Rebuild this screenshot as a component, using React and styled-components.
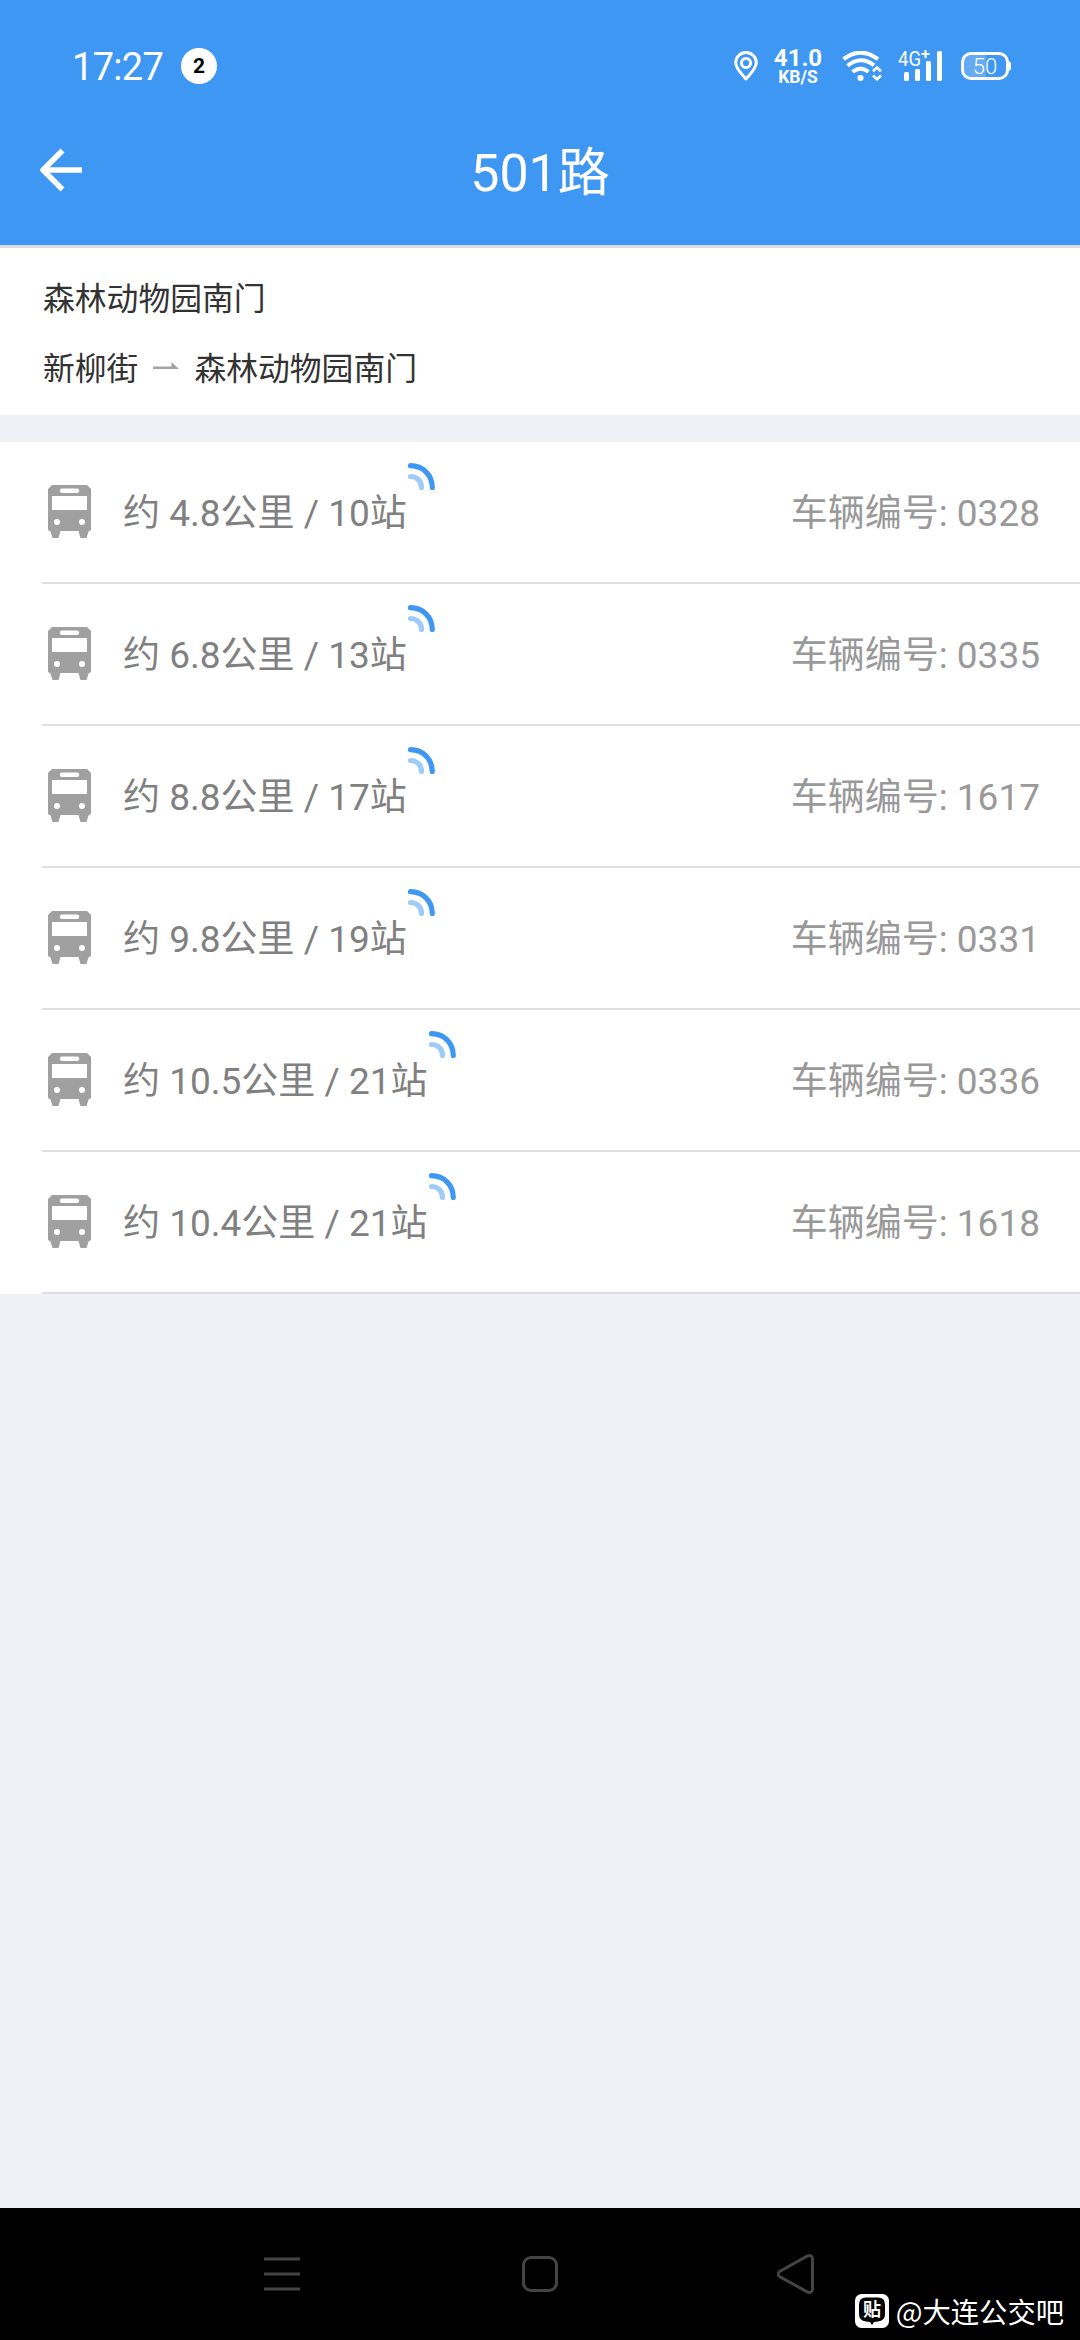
import React from "react";
import styled, { createGlobalStyle } from "styled-components";

const GlobalStyle = createGlobalStyle`
  * {
    box-sizing: border-box;
  }

  body {
    margin: 0;
    background: #f0f1f6;
    font-family: Roboto, "Noto Sans CJK SC", sans-serif;
  }

  svg {
    display: block;
    flex-shrink: 0;
  }
`;

const Screen = styled.div`
  position: relative;
  width: 1080px;
  height: 2340px;
  display: flex;
  flex-direction: column;
  background: #f0f1f6;
  overflow: hidden;
`;

const Header = styled.header`
  height: 248px;
  background: #3e97f2;
  border-bottom: 3px solid #d9dde6;
  color: #fff;
`;

const StatusBar = styled.div`
  height: 132px;
  padding: 0 69px 0 72px;
  display: flex;
  align-items: center;
  justify-content: space-between;
`;

const StatusGroup = styled.div`
  display: flex;
  align-items: center;
`;

const Clock = styled.span`
  width: 109px;
  padding-top: 1px;
  font-size: 38px;
  line-height: 44px;
  letter-spacing: -0.7px;
`;

const CountBadge = styled.span`
  width: 36px;
  height: 36px;
  border-radius: 50%;
  background: #fff;
  color: #000;
  font-size: 21px;
  font-weight: 700;
  line-height: 37px;
  text-align: center;
`;

const NetSpeed = styled.div`
  width: 50px;
  margin: 0 19px 0 15px;
  padding-top: 2px;
  font-weight: 700;
  text-align: center;
`;

const SpeedValue = styled.div`
  font-size: 24px;
  line-height: 19px;
`;

const SpeedUnit = styled.div`
  font-size: 17.5px;
  line-height: 18px;
`;

const SignalBox = styled.div`
  margin: -8px 19px 0 16px;
`;

const TitleBar = styled.div`
  height: 76px;
  padding: 0 40px;
  display: grid;
  grid-template-columns: 42px 1fr 42px;
  align-items: center;
`;

const Title = styled.h1`
  margin: 0;
  padding-top: 7px;
  font-size: 52px;
  font-weight: 400;
  line-height: 60px;
  text-align: center;
`;

const RouteInfo = styled.section`
  height: 167px;
  padding: 13px 43px 0;
  background: #fff;
  color: #333;
  font-size: 31.8px;
`;

const RouteLine = styled.div`
  height: 70px;
  display: flex;
  align-items: center;
  white-space: nowrap;
`;

const DirectionIcon = styled.svg`
  margin: 0 15px 0 15px;
`;

const BusList = styled.ul`
  margin: 27px 0 0;
  padding: 0;
  list-style: none;
  background: #fff;
`;

const BusItem = styled.li`
  height: 142px;
  margin-left: 42px;
  padding: 0 40px 0 6px;
  display: flex;
  align-items: center;
  border-bottom: 2px solid #dfdfdf;
  font-size: 37px;
  line-height: 44px;
  white-space: nowrap;

  > svg:first-child {
    margin-bottom: 1px;
  }
`;

const Distance = styled.div`
  margin-left: 32px;
  padding-top: 4px;
  color: #808080;
`;

const LiveIcon = styled.svg`
  align-self: flex-start;
  margin: 21px 0 0 1px;
`;

const BusNumber = styled.div`
  margin-left: auto;
  padding-top: 4px;
  color: #999;
`;

const NavBar = styled.nav`
  height: 132px;
  margin-top: auto;
  padding: 0 153px;
  display: grid;
  grid-template-columns: repeat(3, 1fr);
  justify-items: center;
  align-items: center;
  background: #000;
`;

const Watermark = styled.div`
  position: absolute;
  right: 16px;
  bottom: 9px;
  display: flex;
  align-items: center;
  gap: 7px;
  color: #fff;
  font-family: "Noto Sans CJK SC", sans-serif;
  font-size: 28.3px;
  line-height: 40px;
`;

const buses = [
  { distance: "4.8", stops: 10, number: "0328" },
  { distance: "6.8", stops: 13, number: "0335" },
  { distance: "8.8", stops: 17, number: "1617" },
  { distance: "9.8", stops: 19, number: "0331" },
  { distance: "10.5", stops: 21, number: "0336" },
  { distance: "10.4", stops: 21, number: "1618" },
];

function PinIcon() {
  return (
    <svg width="24" height="30" viewBox="0 0 24 30" fill="none" stroke="#fff">
      <path d="M12 28C8 23 1.7 18 1.7 11.6a10.3 10.1 0 0 1 20.6 0C22.3 18 16 23 12 28Z" strokeWidth="3" strokeLinejoin="round" />
      <circle cx="12" cy="12" r="4.6" strokeWidth="3" />
    </svg>
  );
}

function WifiIcon() {
  return (
    <svg width="40" height="30" viewBox="0 0 40 30" fill="none" stroke="#fff">
      <path d="M1.5 8.2Q18.5-4.8 36 8.2" strokeWidth="4" />
      <path d="M5.5 14.8Q18.5 4 32 14.3" strokeWidth="4" />
      <path d="M10.5 20.8Q18.5 14.5 26.5 20.8" strokeWidth="4" />
      <circle cx="18.5" cy="27" r="3.1" fill="#fff" stroke="none" />
      <path d="M31 20.3l4-3.8 4 3.8M31 24.5l4 3.8 4-3.8" strokeWidth="2.6" />
    </svg>
  );
}

function SignalIcon() {
  return (
    <svg width="44" height="38" viewBox="0 -8 44 38" fill="#fff">
      <text x="0" y="15" fontSize="19.5" fontFamily="Roboto" textLength="23" lengthAdjust="spacingAndGlyphs">4G</text>
      <path d="M26.5-1h2v3h3v2h-3v3.200h-2V4h-3V2h3z" />
      <rect x="6" y="21" width="5" height="9" rx="1.5" />
      <rect x="17" y="18" width="5" height="12" rx="1.5" />
      <rect x="28" y="10" width="5" height="20" rx="1.5" />
      <rect x="39" y="0" width="5" height="30" rx="1.5" />
    </svg>
  );
}

function BatteryIcon() {
  return (
    <svg width="50" height="28" viewBox="0 0 50 28">
      <path d="M10 3h15v22H10q-7 0-7-7v-8q0-7 7-7z" fill="#fff" opacity="0.2" />
      <rect x="1.5" y="1.5" width="45" height="25" rx="8.5" fill="none" stroke="#fff" strokeWidth="3" />
      <path d="M47 9q3 .5 3 3v4q0 2.5-3 3z" fill="#fff" />
      <text x="24" y="21.5" fill="#fff" fontFamily="Roboto" fontSize="22" fontWeight="300" textAnchor="middle">50</text>
    </svg>
  );
}

function BackArrow() {
  return (
    <svg width="42" height="44" viewBox="0 0 42 44" fill="none" stroke="#fff" strokeWidth="5.5">
      <path d="M42.5 22H4" />
      <path d="M22.5 2.5L3 22l19.5 19.5" strokeLinejoin="round" />
    </svg>
  );
}

function BusIcon() {
  return (
    <svg width="43" height="53" viewBox="0 0 43 53">
      <path
        fill="#a0a0a0"
        fillRule="evenodd"
        d="M4 0h35l4 4v41l-2.500 1.500-2 6.500h-6L30.500 46h-18l-2 7h-6L2.500 46.500 0 45V4zM14 3.500a2 2 0 0 0 0 4.500h15a2 2 0 0 0 0-4.500zM4 11v14h35V11zM9 34a3 3 0 1 0 0 6 3 3 0 0 0 0-6zM34 34a3 3 0 1 0 0 6 3 3 0 0 0 0-6z"
      />
    </svg>
  );
}

function App() {
  return (
    <Screen lang="zh-CN">
      <GlobalStyle />
      <Header>
        <StatusBar>
          <StatusGroup>
            <Clock>17:27</Clock>
            <CountBadge>2</CountBadge>
          </StatusGroup>
          <StatusGroup>
            <PinIcon />
            <NetSpeed>
              <SpeedValue>41.0</SpeedValue>
              <SpeedUnit>KB/S</SpeedUnit>
            </NetSpeed>
            <WifiIcon />
            <SignalBox>
              <SignalIcon />
            </SignalBox>
            <BatteryIcon />
          </StatusGroup>
        </StatusBar>
        <TitleBar>
          <BackArrow />
          <Title>501路</Title>
        </TitleBar>
      </Header>

      <RouteInfo>
        <RouteLine>森林动物园南门</RouteLine>
        <RouteLine>
          新柳街
          <DirectionIcon width="26" height="8" viewBox="0 0 26 8" fill="#a3a3a3">
            <path d="M0 4.5h18.5V0L26 7H0z" />
          </DirectionIcon>
          森林动物园南门
        </RouteLine>
      </RouteInfo>

      <BusList>
        {buses.map((bus) => (
          <BusItem key={bus.number}>
            <BusIcon />
            <Distance>
              约 {bus.distance}公里 / {bus.stops}站
            </Distance>
            <LiveIcon width="27" height="27" viewBox="0 0 27 27" fill="none" strokeWidth="5.2" strokeLinecap="round">
              <path d="M2.5 2.7C15 3 24 11.500 24.300 24.500" stroke="#3e97f2" />
              <path d="M2.5 13.5C9 13.500 13.500 18 13.500 24.500" stroke="#9fcbf8" />
            </LiveIcon>
            <BusNumber>车辆编号: {bus.number}</BusNumber>
          </BusItem>
        ))}
      </BusList>

      <NavBar>
        <svg width="36" height="34" viewBox="0 0 36 34" stroke="#444" strokeWidth="3">
          <path d="M0 2h36M0 17h36M0 32h36" />
        </svg>
        <svg width="36" height="36" viewBox="0 0 36 36" fill="none" stroke="#444" strokeWidth="3">
          <rect x="1.5" y="1.5" width="33" height="33" rx="7.5" />
        </svg>
        <svg width="42" height="40" viewBox="0 0 42 40" fill="none" stroke="#444" strokeWidth="3">
          <path d="M2.5 17.5L30.500 2q4.500-1.500 5 2.500v31q-.5 4-5 2.500L2.500 22.500q-2.500-2.500 0-5z" />
        </svg>
      </NavBar>

      <Watermark>
        <svg width="34" height="34" viewBox="0 0 34 34">
          <rect width="34" height="34" rx="6.5" fill="#fff" />
          <path d="M11 3.5h12q7 0 7 7V20q0 7-7 7.500l-4 .5-2 3-2-3-4-.5Q4 27 4 20v-9.500q0-7 7-7z" fill="#000" />
          <text x="17" y="22" fill="#fff" fontFamily="Noto Sans CJK SC" fontSize="18" fontWeight="700" textAnchor="middle">贴</text>
        </svg>
        <span>@大连公交吧</span>
      </Watermark>
    </Screen>
  );
}

export default App;
